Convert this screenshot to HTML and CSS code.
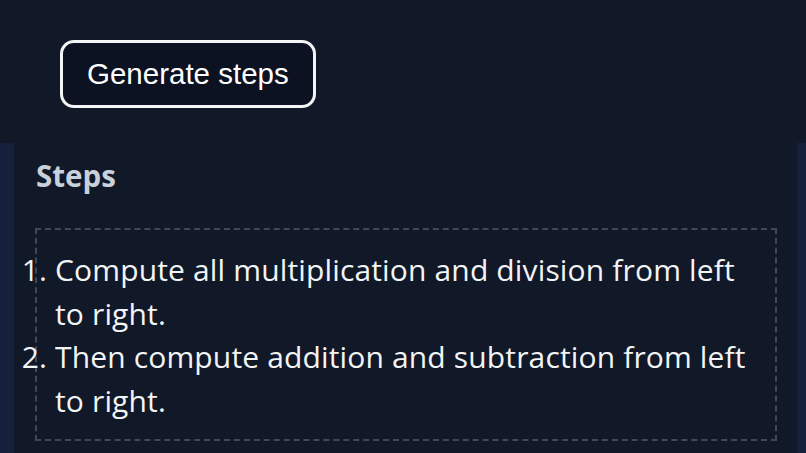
FILE: index.html
```html
<!DOCTYPE html>
<html lang="en">
<head>
  <meta charset="UTF-8">
  <meta name="viewport" content="width=device-width, initial-scale=1.0">
  <title>Steps</title>
  <link rel="stylesheet" href="styles.css">
</head>
<body>
  <div class="toolbar">
    <button class="btn">Generate steps</button>
  </div>

  <!-- Steps panel -->
  <div class="section">
    <div class="panel">
      <h2 class="panel-title">Steps</h2>
      <div class="steps-box">
        <ol class="steps">
          <li>Compute all multiplication and division from left to right.</li>
          <li>Then compute addition and subtraction from left to right.</li>
        </ol>
      </div>
    </div>
  </div>
</body>
</html>
```

FILE: styles.css
```css
/* Stylesheet */
body {
  margin: 0;
  background-color: #111827;
  color: #f3f4f6;
  font-family: "Open Sans", "Noto Sans", sans-serif;
}

.toolbar {
  height: 143px;
  box-sizing: border-box;
  padding: 40px 0 0 60px;
}

.btn {
  font-family: "Liberation Sans", Arial, sans-serif;
  font-size: 29.5px;
  line-height: 34px;
  color: #ffffff;
  background-color: #0c1221;
  border: 3px solid #f3f4f6;
  border-radius: 14px;
  padding: 14px 24px;
  cursor: pointer;
}

.section {
  background-color: #16203a;
  padding: 0 9px 0 14px;
  height: 310px;
}

.panel {
  background-color: #111827;
  height: 100%;
  box-sizing: border-box;
  padding: 14px 20px 0 21px;
}

.panel-title {
  margin: 0 0 33px 1px;
  font-size: 29.5px;
  line-height: 38px;
  font-weight: 700;
  color: #c8d0dc;
}

.steps-box {
  border: 2px dashed #3e4859;
  padding: 18px 18px 17px 18px;
}

.steps {
  margin: 0;
  padding: 0;
  font-size: 30px;
  line-height: 43.5px;
  letter-spacing: 0.15px;
}
```
